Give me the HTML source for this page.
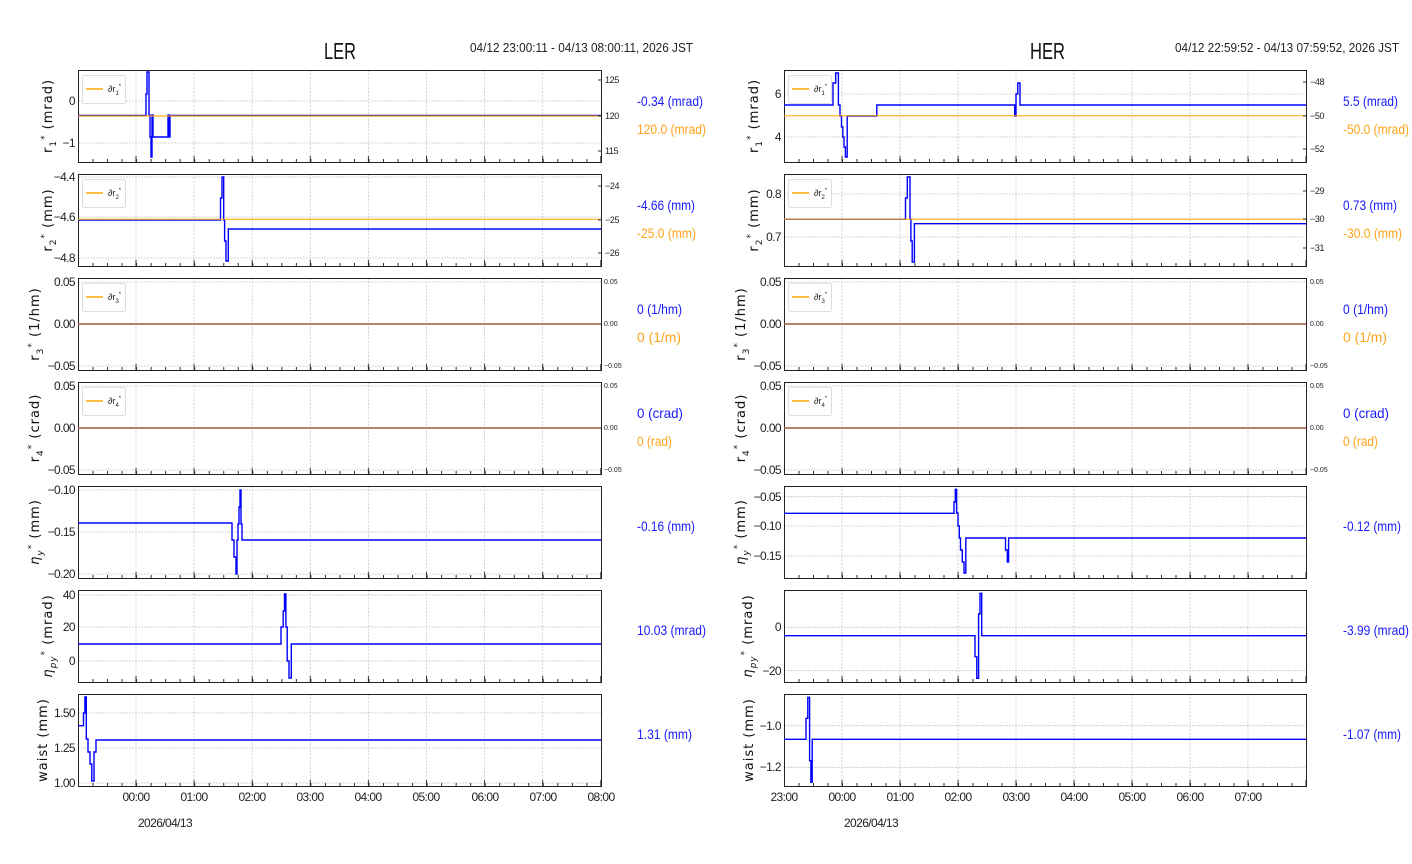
<!DOCTYPE html>
<html><head><meta charset="utf-8"><style>
html,body{margin:0;padding:0;background:#fff;}
svg{display:block;}
.t{font-family:"Liberation Sans",sans-serif;font-size:12px;fill:#222;letter-spacing:-0.6px;}
.ts{font-family:"Liberation Sans",sans-serif;font-size:9px;fill:#222;letter-spacing:-0.4px;}
.tx{font-family:"Liberation Sans",sans-serif;font-size:7px;fill:#222;}
.yl{font-family:"DejaVu Sans",sans-serif;font-size:13px;fill:#111;letter-spacing:1px;}
.vb{font-family:"Liberation Sans",sans-serif;font-size:14px;fill:#1a1aff;}
.vo{font-family:"Liberation Sans",sans-serif;font-size:14px;fill:#ffa41a;}
.b{fill:none;stroke:#0000ff;stroke-width:1.4;}
.o{fill:none;stroke:#ffa500;stroke-width:1.4;opacity:.75;}
.hg{stroke:#c8c8c8;stroke-width:.8;stroke-dasharray:2 1;}
</style></head><body>
<svg width="1412" height="864" viewBox="0 0 1412 864" xmlns="http://www.w3.org/2000/svg">
<defs>
<g id="gL">
<path d="M136 0V92M194.1 0V92M252.2 0V92M310.3 0V92M368.4 0V92M426.5 0V92M484.6 0V92M542.7 0V92" stroke="#c8c8c8" stroke-width=".8" stroke-dasharray="2 1.5"/>
<line x1="78" y1="90.5" x2="601" y2="90.5" stroke="#333" stroke-width="3" stroke-dasharray="1 13.525"/>
<line x1="135.5" y1="89" x2="601" y2="89" stroke="#333" stroke-width="6" stroke-dasharray="1 57.1"/>
<rect x="78.5" y="0.5" width="523" height="92" fill="none" stroke="#222" stroke-width="1"/>
</g>
<g id="gR">
<path d="M842 0V92M900 0V92M958 0V92M1016 0V92M1074 0V92M1132 0V92M1190 0V92M1248 0V92" stroke="#c8c8c8" stroke-width=".8" stroke-dasharray="2 1.5"/>
<line x1="784" y1="90.5" x2="1306" y2="90.5" stroke="#333" stroke-width="3" stroke-dasharray="1 13.5"/>
<line x1="841.5" y1="89" x2="1306" y2="89" stroke="#333" stroke-width="6" stroke-dasharray="1 57"/>
<rect x="784.5" y="0.5" width="522" height="92" fill="none" stroke="#222" stroke-width="1"/>
</g>
</defs>

<!-- Titles -->
<text x="324" y="59" font-family="Liberation Sans,sans-serif" font-size="23" fill="#111" textLength="32" lengthAdjust="spacingAndGlyphs">LER</text>
<text x="470" y="52" font-family="Liberation Sans,sans-serif" font-size="13" fill="#222" textLength="223" lengthAdjust="spacingAndGlyphs">04/12 23:00:11 - 04/13 08:00:11, 2026 JST</text>
<text x="1030" y="59" font-family="Liberation Sans,sans-serif" font-size="23" fill="#111" textLength="35" lengthAdjust="spacingAndGlyphs">HER</text>
<text x="1175" y="52" font-family="Liberation Sans,sans-serif" font-size="13" fill="#222" textLength="224" lengthAdjust="spacingAndGlyphs">04/12 22:59:52 - 04/13 07:59:52, 2026 JST</text>

<!-- ============ LEFT ============ -->
<!-- r1 -->
<path class="hg" d="M78 101H601M78 143H601"/>
<use href="#gL" transform="translate(0,70)"/>
<path class="b" d="M78,115.5H146V94H147V72H149V115H150V137H151V157H152V115H153V137H168V115H169V137H170V115.5H601"/>
<path class="o" d="M78,116H601"/>
<text class="t" x="75" y="105" text-anchor="end">0</text>
<text class="t" x="75" y="147" text-anchor="end">−1</text>
<text class="ts" x="605" y="83">125</text><text class="ts" x="605" y="119">120</text><text class="ts" x="605" y="154">115</text>
<path d="M601 80h-3M601 116h-3M601 151h-3" stroke="#333"/>
<rect x="82.5" y="75.5" width="43" height="28" rx="2" fill="#fff" stroke="#ddd"/>
<path d="M86 89H103" stroke="#ffa500" stroke-width="1.5"/>
<text class="tx" x="108" y="92" style="font-size:9px">∂r<tspan font-size="6" dy="3">1</tspan><tspan font-size="6" dy="-7">*</tspan></text>
<text class="yl" transform="translate(52,116) rotate(-90)" text-anchor="middle">r<tspan font-size="9" dy="4">1</tspan><tspan font-size="9" dy="-9">*</tspan><tspan dy="5">  (mrad)</tspan></text>
<text class="vb" x="637" y="106" textLength="66" lengthAdjust="spacingAndGlyphs">-0.34 (mrad)</text>
<text class="vo" x="637" y="134" textLength="69" lengthAdjust="spacingAndGlyphs">120.0 (mrad)</text>

<!-- r2 -->
<path class="hg" d="M78 177H601M78 217H601M78 258H601"/>
<use href="#gL" transform="translate(0,174)"/>
<path class="b" d="M78,220H220.5V198H222V177H223.7V220H224.6V241H226V261H228.3V229H601"/>
<path class="o" d="M78,219.3H601"/>
<text class="t" x="75" y="181" text-anchor="end">−4.4</text>
<text class="t" x="75" y="221" text-anchor="end">−4.6</text>
<text class="t" x="75" y="262" text-anchor="end">−4.8</text>
<text class="ts" x="605" y="189">−24</text><text class="ts" x="605" y="223">−25</text><text class="ts" x="605" y="256">−26</text>
<path d="M601 186h-3M601 220h-3M601 253h-3" stroke="#333"/>
<rect x="82.5" y="179.5" width="43" height="28" rx="2" fill="#fff" stroke="#ddd"/>
<path d="M86 193H103" stroke="#ffa500" stroke-width="1.5"/>
<text class="tx" x="108" y="196" style="font-size:9px">∂r<tspan font-size="6" dy="3">2</tspan><tspan font-size="6" dy="-7">*</tspan></text>
<text class="yl" transform="translate(52,220) rotate(-90)" text-anchor="middle">r<tspan font-size="9" dy="4">2</tspan><tspan font-size="9" dy="-9">*</tspan><tspan dy="5">  (mm)</tspan></text>
<text class="vb" x="637" y="210" textLength="58" lengthAdjust="spacingAndGlyphs">-4.66 (mm)</text>
<text class="vo" x="637" y="238" textLength="59" lengthAdjust="spacingAndGlyphs">-25.0 (mm)</text>

<!-- r3 -->
<path class="hg" d="M78 282H601M78 324H601M78 366H601"/>
<use href="#gL" transform="translate(0,278)"/>
<path class="b" d="M78,324H601"/><path class="o" d="M78,324H601"/>
<text class="t" x="75" y="286" text-anchor="end">0.05</text>
<text class="t" x="75" y="328" text-anchor="end">0.00</text>
<text class="t" x="75" y="370" text-anchor="end">−0.05</text>
<text class="tx" x="604" y="284">0.05</text><text class="tx" x="604" y="326">0.00</text><text class="tx" x="604" y="368">−0.05</text>
<rect x="82.5" y="283.5" width="43" height="28" rx="2" fill="#fff" stroke="#ddd"/>
<path d="M86 297H103" stroke="#ffa500" stroke-width="1.5"/>
<text class="tx" x="108" y="300" style="font-size:9px">∂r<tspan font-size="6" dy="3">3</tspan><tspan font-size="6" dy="-7">*</tspan></text>
<text class="yl" transform="translate(39,324) rotate(-90)" text-anchor="middle">r<tspan font-size="9" dy="4">3</tspan><tspan font-size="9" dy="-9">*</tspan><tspan dy="5">  (1/hm)</tspan></text>
<text class="vb" x="637" y="314" textLength="45" lengthAdjust="spacingAndGlyphs">0 (1/hm)</text>
<text class="vo" x="637" y="342" textLength="44" lengthAdjust="spacingAndGlyphs">0 (1/m)</text>

<!-- r4 -->
<path class="hg" d="M78 386H601M78 428H601M78 470H601"/>
<use href="#gL" transform="translate(0,382)"/>
<path class="b" d="M78,428H601"/><path class="o" d="M78,428H601"/>
<text class="t" x="75" y="390" text-anchor="end">0.05</text>
<text class="t" x="75" y="432" text-anchor="end">0.00</text>
<text class="t" x="75" y="474" text-anchor="end">−0.05</text>
<text class="tx" x="604" y="388">0.05</text><text class="tx" x="604" y="430">0.00</text><text class="tx" x="604" y="472">−0.05</text>
<rect x="82.5" y="387.5" width="43" height="28" rx="2" fill="#fff" stroke="#ddd"/>
<path d="M86 401H103" stroke="#ffa500" stroke-width="1.5"/>
<text class="tx" x="108" y="404" style="font-size:9px">∂r<tspan font-size="6" dy="3">4</tspan><tspan font-size="6" dy="-7">*</tspan></text>
<text class="yl" transform="translate(39,428) rotate(-90)" text-anchor="middle">r<tspan font-size="9" dy="4">4</tspan><tspan font-size="9" dy="-9">*</tspan><tspan dy="5">  (crad)</tspan></text>
<text class="vb" x="637" y="418" textLength="46" lengthAdjust="spacingAndGlyphs">0 (crad)</text>
<text class="vo" x="637" y="446" textLength="35" lengthAdjust="spacingAndGlyphs">0 (rad)</text>

<!-- eta_y -->
<path class="hg" d="M78 490H601M78 532H601M78 574H601"/>
<use href="#gL" transform="translate(0,486)"/>
<path class="b" d="M78,523H232V540H234V557H236V574H237V540H238V524H239V507H240V490H241V524H242V540H601"/>
<text class="t" x="75" y="494" text-anchor="end">−0.10</text>
<text class="t" x="75" y="536" text-anchor="end">−0.15</text>
<text class="t" x="75" y="578" text-anchor="end">−0.20</text>
<text class="yl" transform="translate(39,532) rotate(-90)" text-anchor="middle"><tspan font-style="italic">η</tspan><tspan font-size="9" dy="4" font-style="italic">y</tspan><tspan font-size="9" dy="-9">*</tspan><tspan dy="5">  (mm)</tspan></text>
<text class="vb" x="637" y="531" textLength="58" lengthAdjust="spacingAndGlyphs">-0.16 (mm)</text>

<!-- eta_py -->
<path class="hg" d="M78 595H601M78 627H601M78 661H601"/>
<use href="#gL" transform="translate(0,590)"/>
<path class="b" d="M78,644H281V627H283.2V611H284.5V594H285.9V627H287.2V661H289V678H291.3V644H601"/>
<text class="t" x="75" y="599" text-anchor="end">40</text>
<text class="t" x="75" y="631" text-anchor="end">20</text>
<text class="t" x="75" y="665" text-anchor="end">0</text>
<text class="yl" transform="translate(52,636) rotate(-90)" text-anchor="middle"><tspan font-style="italic">η</tspan><tspan font-size="9" dy="4" font-style="italic">py</tspan><tspan font-size="9" dy="-9">*</tspan><tspan dy="5">  (mrad)</tspan></text>
<text class="vb" x="637" y="635" textLength="69" lengthAdjust="spacingAndGlyphs">10.03 (mrad)</text>

<!-- waist -->
<path class="hg" d="M78 713H601M78 748H601M78 783H601"/>
<use href="#gL" transform="translate(0,694)"/>
<path class="b" d="M78,725.7H83.5V713H84.9V697H86.3V739H88V752H90V764H91.8V781H94V752H96V740H601"/>
<text class="t" x="75" y="717" text-anchor="end">1.50</text>
<text class="t" x="75" y="752" text-anchor="end">1.25</text>
<text class="t" x="75" y="787" text-anchor="end">1.00</text>
<text class="yl" transform="translate(47,740) rotate(-90)" text-anchor="middle">waist  (mm)</text>
<text class="vb" x="637" y="739" textLength="55" lengthAdjust="spacingAndGlyphs">1.31 (mm)</text>

<!-- x labels left -->
<g class="t" text-anchor="middle">
<text x="136" y="801">00:00</text><text x="194" y="801">01:00</text><text x="252" y="801">02:00</text><text x="310" y="801">03:00</text><text x="368" y="801">04:00</text><text x="426" y="801">05:00</text><text x="485" y="801">06:00</text><text x="543" y="801">07:00</text><text x="601" y="801">08:00</text>
<text x="165" y="827">2026/04/13</text>
</g>

<!-- ============ RIGHT ============ -->
<!-- r1 -->
<path class="hg" d="M784 94H1306M784 137H1306"/>
<use href="#gR" transform="translate(0,70)"/>
<path class="b" d="M784,105H833V83H835.7V73H838.4V105H840V116H841.5V127H842.8V137H844V147H845.4V157H847.2V116H876.8V105H1014.7V116H1016V94H1017.8V83H1020V105H1306"/>
<path class="o" d="M784,115.7H1306"/>
<text class="t" x="781" y="98" text-anchor="end">6</text>
<text class="t" x="781" y="141" text-anchor="end">4</text>
<text class="ts" x="1310" y="85">−48</text><text class="ts" x="1310" y="119">−50</text><text class="ts" x="1310" y="152">−52</text>
<path d="M1306 82h-3M1306 116h-3M1306 149h-3" stroke="#333"/>
<rect x="788.5" y="75.5" width="43" height="28" rx="2" fill="#fff" stroke="#ddd"/>
<path d="M792 89H809" stroke="#ffa500" stroke-width="1.5"/>
<text class="tx" x="814" y="92" style="font-size:9px">∂r<tspan font-size="6" dy="3">1</tspan><tspan font-size="6" dy="-7">*</tspan></text>
<text class="yl" transform="translate(758,116) rotate(-90)" text-anchor="middle">r<tspan font-size="9" dy="4">1</tspan><tspan font-size="9" dy="-9">*</tspan><tspan dy="5">  (mrad)</tspan></text>
<text class="vb" x="1343" y="106" textLength="55" lengthAdjust="spacingAndGlyphs">5.5 (mrad)</text>
<text class="vo" x="1343" y="134" textLength="66" lengthAdjust="spacingAndGlyphs">-50.0 (mrad)</text>

<!-- r2 -->
<path class="hg" d="M784 194H1306M784 237H1306"/>
<use href="#gR" transform="translate(0,174)"/>
<path class="b" d="M784,219.3H905.5V198H907.3V177H910V219H910.9V241H912.2V262H914.4V223.7H1306"/>
<path class="o" d="M784,219.3H1306"/>
<text class="t" x="781" y="198" text-anchor="end">0.8</text>
<text class="t" x="781" y="241" text-anchor="end">0.7</text>
<text class="ts" x="1310" y="194">−29</text><text class="ts" x="1310" y="222">−30</text><text class="ts" x="1310" y="251">−31</text>
<path d="M1306 191h-3M1306 219h-3M1306 248h-3" stroke="#333"/>
<rect x="788.5" y="179.5" width="43" height="28" rx="2" fill="#fff" stroke="#ddd"/>
<path d="M792 193H809" stroke="#ffa500" stroke-width="1.5"/>
<text class="tx" x="814" y="196" style="font-size:9px">∂r<tspan font-size="6" dy="3">2</tspan><tspan font-size="6" dy="-7">*</tspan></text>
<text class="yl" transform="translate(758,220) rotate(-90)" text-anchor="middle">r<tspan font-size="9" dy="4">2</tspan><tspan font-size="9" dy="-9">*</tspan><tspan dy="5">  (mm)</tspan></text>
<text class="vb" x="1343" y="210" textLength="54" lengthAdjust="spacingAndGlyphs">0.73 (mm)</text>
<text class="vo" x="1343" y="238" textLength="59" lengthAdjust="spacingAndGlyphs">-30.0 (mm)</text>

<!-- r3 -->
<path class="hg" d="M784 282H1306M784 324H1306M784 366H1306"/>
<use href="#gR" transform="translate(0,278)"/>
<path class="b" d="M784,324H1306"/><path class="o" d="M784,324H1306"/>
<text class="t" x="781" y="286" text-anchor="end">0.05</text>
<text class="t" x="781" y="328" text-anchor="end">0.00</text>
<text class="t" x="781" y="370" text-anchor="end">−0.05</text>
<text class="tx" x="1310" y="284">0.05</text><text class="tx" x="1310" y="326">0.00</text><text class="tx" x="1310" y="368">−0.05</text>
<rect x="788.5" y="283.5" width="43" height="28" rx="2" fill="#fff" stroke="#ddd"/>
<path d="M792 297H809" stroke="#ffa500" stroke-width="1.5"/>
<text class="tx" x="814" y="300" style="font-size:9px">∂r<tspan font-size="6" dy="3">3</tspan><tspan font-size="6" dy="-7">*</tspan></text>
<text class="yl" transform="translate(745,324) rotate(-90)" text-anchor="middle">r<tspan font-size="9" dy="4">3</tspan><tspan font-size="9" dy="-9">*</tspan><tspan dy="5">  (1/hm)</tspan></text>
<text class="vb" x="1343" y="314" textLength="45" lengthAdjust="spacingAndGlyphs">0 (1/hm)</text>
<text class="vo" x="1343" y="342" textLength="44" lengthAdjust="spacingAndGlyphs">0 (1/m)</text>

<!-- r4 -->
<path class="hg" d="M784 386H1306M784 428H1306M784 470H1306"/>
<use href="#gR" transform="translate(0,382)"/>
<path class="b" d="M784,428H1306"/><path class="o" d="M784,428H1306"/>
<text class="t" x="781" y="390" text-anchor="end">0.05</text>
<text class="t" x="781" y="432" text-anchor="end">0.00</text>
<text class="t" x="781" y="474" text-anchor="end">−0.05</text>
<text class="tx" x="1310" y="388">0.05</text><text class="tx" x="1310" y="430">0.00</text><text class="tx" x="1310" y="472">−0.05</text>
<rect x="788.5" y="387.5" width="43" height="28" rx="2" fill="#fff" stroke="#ddd"/>
<path d="M792 401H809" stroke="#ffa500" stroke-width="1.5"/>
<text class="tx" x="814" y="404" style="font-size:9px">∂r<tspan font-size="6" dy="3">4</tspan><tspan font-size="6" dy="-7">*</tspan></text>
<text class="yl" transform="translate(745,428) rotate(-90)" text-anchor="middle">r<tspan font-size="9" dy="4">4</tspan><tspan font-size="9" dy="-9">*</tspan><tspan dy="5">  (crad)</tspan></text>
<text class="vb" x="1343" y="418" textLength="46" lengthAdjust="spacingAndGlyphs">0 (crad)</text>
<text class="vo" x="1343" y="446" textLength="35" lengthAdjust="spacingAndGlyphs">0 (rad)</text>

<!-- eta_y -->
<path class="hg" d="M784 496.7H1306M784 526H1306M784 556H1306"/>
<use href="#gR" transform="translate(0,486)"/>
<path class="b" d="M784,513.3H954V502H955.3V489.3H956.6V513H958V526H959.3V538H960.5V550H962.3V562H964V573H965.8V538H1005.5V550H1007.3V562H1008.6V538H1306"/>
<text class="t" x="781" y="501" text-anchor="end">−0.05</text>
<text class="t" x="781" y="530" text-anchor="end">−0.10</text>
<text class="t" x="781" y="560" text-anchor="end">−0.15</text>
<text class="yl" transform="translate(745,532) rotate(-90)" text-anchor="middle"><tspan font-style="italic">η</tspan><tspan font-size="9" dy="4" font-style="italic">y</tspan><tspan font-size="9" dy="-9">*</tspan><tspan dy="5">  (mm)</tspan></text>
<text class="vb" x="1343" y="531" textLength="58" lengthAdjust="spacingAndGlyphs">-0.12 (mm)</text>

<!-- eta_py -->
<path class="hg" d="M784 627.3H1306M784 670.7H1306"/>
<use href="#gR" transform="translate(0,590)"/>
<path class="b" d="M784,635.7H975V656.7H976.8V678.3H978.6V614H980V593.3H981.7V635.7H1306"/>
<text class="t" x="781" y="631" text-anchor="end">0</text>
<text class="t" x="781" y="675" text-anchor="end">−20</text>
<text class="yl" transform="translate(752,636) rotate(-90)" text-anchor="middle"><tspan font-style="italic">η</tspan><tspan font-size="9" dy="4" font-style="italic">py</tspan><tspan font-size="9" dy="-9">*</tspan><tspan dy="5">  (mrad)</tspan></text>
<text class="vb" x="1343" y="635" textLength="66" lengthAdjust="spacingAndGlyphs">-3.99 (mrad)</text>

<!-- waist -->
<path class="hg" d="M784 725.7H1306M784 767.3H1306"/>
<use href="#gR" transform="translate(0,694)"/>
<path class="b" d="M784,739.3H806V718.3H807.8V697.3H809.6V760.7H810.9V782.3H812.2V739.3H1306"/>
<text class="t" x="781" y="730" text-anchor="end">−1.0</text>
<text class="t" x="781" y="771" text-anchor="end">−1.2</text>
<text class="yl" transform="translate(753,740) rotate(-90)" text-anchor="middle">waist  (mm)</text>
<text class="vb" x="1343" y="739" textLength="58" lengthAdjust="spacingAndGlyphs">-1.07 (mm)</text>

<g class="t" text-anchor="middle">
<text x="784" y="801">23:00</text><text x="842" y="801">00:00</text><text x="900" y="801">01:00</text><text x="958" y="801">02:00</text><text x="1016" y="801">03:00</text><text x="1074" y="801">04:00</text><text x="1132" y="801">05:00</text><text x="1190" y="801">06:00</text><text x="1248" y="801">07:00</text>
<text x="871" y="827">2026/04/13</text>
</g>
</svg>
</body></html>
